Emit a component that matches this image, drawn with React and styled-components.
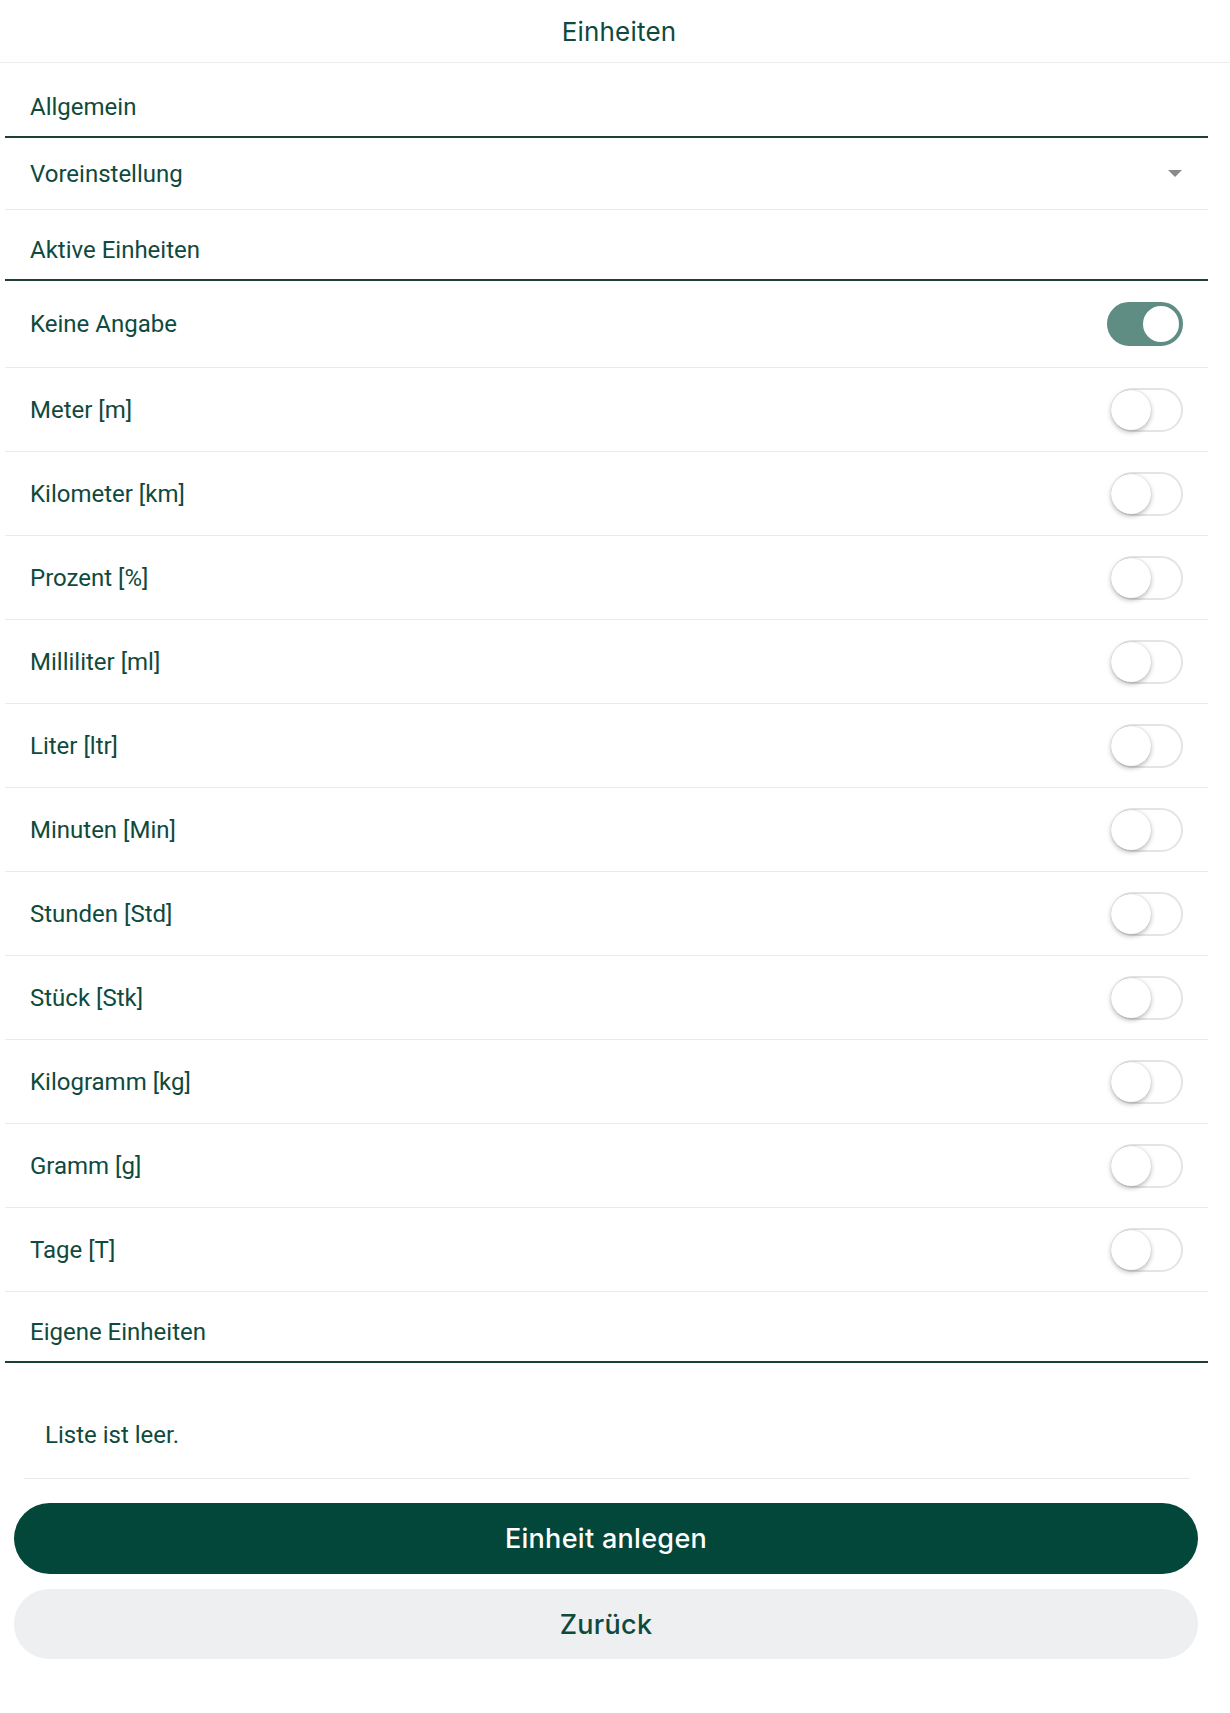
import React from 'react'
import styled, { createGlobalStyle } from 'styled-components'

const ink = '#0f4a3e'

const GlobalStyle = createGlobalStyle`
  html, body {
    margin: 0;
    padding: 0;
    background: #ffffff;
  }
  body {
    font-family: Roboto, 'Liberation Sans', sans-serif;
    color: ${ink};
  }
  *, *::before, *::after {
    box-sizing: border-box;
  }
`

const Page = styled.div`
  width: 1230px;
  min-height: 1713px;
  background: #fff;
`

const Header = styled.header`
  height: 63px;
  display: flex;
  align-items: center;
  justify-content: center;
  padding-left: 8px;
  border-bottom: 1px solid #ececec;
`

const Title = styled.h1`
  margin: 0;
  font-family: Inter, 'Open Sans', sans-serif;
  font-size: 26px;
  font-weight: 400;
  color: ${ink};
  letter-spacing: 0.2px;
`

const List = styled.div`
  margin: 0 22px 0 5px;
`

const Section = styled.div`
  padding: ${({ $top }) => $top}px 25px ${({ $bottom }) => $bottom}px;
  border-bottom: 2px solid #1c3f37;
  font-size: 24px;
  line-height: 28px;
  color: ${ink};
`

const Row = styled.div`
  height: ${({ $h }) => $h}px;
  display: flex;
  align-items: center;
  justify-content: space-between;
  padding: 0 25px;
  border-bottom: 1px solid #ebebeb;
  font-size: 24px;
  color: ${ink};
`

const Caret = styled.span`
  width: 0;
  height: 0;
  margin-right: 1px;
  border-left: 7px solid transparent;
  border-right: 7px solid transparent;
  border-top: 7px solid #8a8a8a;
`

const Track = styled.button`
  position: relative;
  width: ${({ $on }) => ($on ? 76 : 72)}px;
  height: 44px;
  padding: 0;
  border-radius: 22px;
  cursor: pointer;
  border: 2px solid ${({ $on }) => ($on ? '#5f8d83' : '#e4e4e4')};
  background: ${({ $on }) => ($on ? '#5f8d83' : '#ffffff')};
`

const Knob = styled.span`
  position: absolute;
  top: 0;
  left: ${({ $on }) => ($on ? '32px' : '-2px')};
  width: 40px;
  height: 40px;
  border-radius: 50%;
  background: #fff;
  border: ${({ $on }) => ($on ? '2px solid #5f8d83' : 'none')};
  box-shadow: ${({ $on }) =>
    $on ? 'none' : '0 2px 5px rgba(0,0,0,0.28), 0 0 1px rgba(0,0,0,0.2)'};
`

const Toggle = ({ on }) => (
  <Track $on={on} aria-pressed={on}>
    <Knob $on={on} />
  </Track>
)

const EmptyItem = styled.div`
  margin: 0 18px 0 19px;
  padding: 58px 21px 29px;
  border-bottom: 1px solid #ebebeb;
  font-size: 24px;
  line-height: 28px;
  color: ${ink};
`

const Actions = styled.div`
  margin: 24px 32px 0 14px;
  display: flex;
  flex-direction: column;
  gap: 15px;
`

const Button = styled.button`
  height: ${({ $primary }) => ($primary ? 71 : 70)}px;
  border: none;
  border-radius: 36px;
  font-family: Inter, 'Open Sans', sans-serif;
  font-size: 27px;
  font-weight: 500;
  letter-spacing: 0.3px;
  cursor: pointer;
  background: ${({ $primary }) => ($primary ? '#03473a' : '#eeeff1')};
  color: ${({ $primary }) => ($primary ? '#ffffff' : ink)};
`

const units = [
  ['Keine Angabe', true],
  ['Meter [m]', false],
  ['Kilometer [km]', false],
  ['Prozent [%]', false],
  ['Milliliter [ml]', false],
  ['Liter [ltr]', false],
  ['Minuten [Min]', false],
  ['Stunden [Std]', false],
  ['Stück [Stk]', false],
  ['Kilogramm [kg]', false],
  ['Gramm [g]', false],
  ['Tage [T]', false],
]

export default function App() {
  return (
    <Page>
      <GlobalStyle />
      <Header>
        <Title>Einheiten</Title>
      </Header>
      <List>
        <Section $top={30} $bottom={15}>Allgemein</Section>
        <Row $h={72}>
          <span>Voreinstellung</span>
          <Caret />
        </Row>
        <Section $top={26} $bottom={15}>Aktive Einheiten</Section>
        {units.map(([label, on], i) => (
          <Row key={label} $h={i === 0 ? 87 : 84}>
            <span>{label}</span>
            <Toggle on={on} />
          </Row>
        ))}
        <Section $top={26} $bottom={15}>Eigene Einheiten</Section>
        <EmptyItem>Liste ist leer.</EmptyItem>
      </List>
      <Actions>
        <Button $primary>Einheit anlegen</Button>
        <Button>Zurück</Button>
      </Actions>
    </Page>
  )
}
